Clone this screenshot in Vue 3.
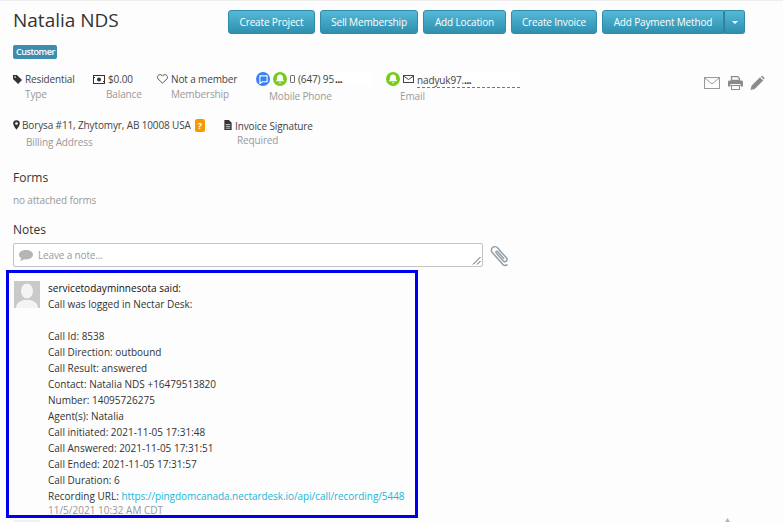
<script setup>
const actions = ['Create Project', 'Sell Membership', 'Add Location', 'Create Invoice']
const lines = [
  'Call Id: 8538',
  'Call Direction: outbound',
  'Call Result: answered',
  'Contact: Natalia NDS +16479513820',
  'Number: 14095726275',
  'Agent(s): Natalia',
  'Call initiated: 2021-11-05 17:31:48',
  'Call Answered: 2021-11-05 17:31:51',
  'Call Ended: 2021-11-05 17:31:57',
  'Call Duration: 6'
]
</script>

<template>
  <div class="page">
    <header class="head">
      <h1>Natalia NDS</h1>
      <div class="actions">
        <button v-for="a in actions" :key="a" class="btn act">{{ a }}</button>
        <div class="split">
          <button class="btn main">Add Payment Method</button>
          <button class="btn caret"><i></i></button>
        </div>
      </div>
    </header>
    <span class="badge">Customer</span>

    <section class="info">
      <div class="cell type">
        <div class="val">
          <svg width="9" height="9" viewBox="0 0 12 12"><path d="M0 0h5.200L12 6.800 6.800 12 0 5.200z" fill="#333"/><circle cx="2.800" cy="2.800" r="1.100" fill="#fdfdfd"/></svg>
          Residential
        </div>
        <div class="lab">Type</div>
      </div>
      <div class="cell bal">
        <div class="val">
          <svg width="12" height="9" viewBox="0 0 12 9"><rect x=".5" y=".5" width="11" height="8" fill="none" stroke="#333"/><circle cx="6" cy="4.500" r="2" fill="#333"/><path d="M1 2.500h1M10 6.500h1" stroke="#333"/></svg>
          $0.00
        </div>
        <div class="lab">Balance</div>
      </div>
      <div class="cell mem">
        <div class="val">
          <svg width="11" height="10" viewBox="0 0 12 11"><path d="M6 10.200 1.200 5.400C-.4 3.600 1 .7 3.300.7 4.500.7 5.400 1.400 6 2.400 6.600 1.400 7.500.7 8.700.7c2.300 0 3.700 2.900 2.100 4.700z" fill="none" stroke="#444"/></svg>
          Not a member
        </div>
        <div class="lab">Membership</div>
      </div>
      <div class="cell phone">
        <div class="val">
          <span class="dot blue"><svg width="9" height="9" viewBox="0 0 10 10"><path d="M1 1h8v6.500H3.500L1 9.500z" fill="none" stroke="#fff" stroke-width="1.200"/></svg></span>
          <span class="dot green"><svg width="10" height="10" viewBox="0 0 10 10"><path d="M5 .5c2 0 3 1.500 3 3.200 0 2 .6 2.800 1.300 3.600H.7C1.400 6.500 2 5.700 2 3.700 2 2 3 .5 5 .5zM3.800 8.200h2.400L5 9.700z" fill="#fff"/></svg></span>
          <svg class="mobile" width="5" height="8" viewBox="0 0 5 8"><rect x=".5" y=".5" width="4" height="7" rx=".7" fill="none" stroke="#666"/></svg>
          <span class="masked">(647) 95<b class="mask wide">...</b></span>
        </div>
        <div class="lab">Mobile Phone</div>
      </div>
      <div class="cell mail">
        <div class="val">
          <span class="dot green"><svg width="10" height="10" viewBox="0 0 10 10"><path d="M5 .5c2 0 3 1.500 3 3.200 0 2 .6 2.800 1.300 3.600H.7C1.400 6.500 2 5.700 2 3.700 2 2 3 .5 5 .5zM3.800 8.200h2.400L5 9.700z" fill="#fff"/></svg></span>
          <svg width="11" height="8" viewBox="0 0 11 8"><rect x=".5" y=".5" width="10" height="7" fill="none" stroke="#444"/><path d="m.5 1 5 3.500 5-3.500" fill="none" stroke="#444"/></svg>
          <span class="addr">nadyuk97.<b class="mask">...</b></span>
        </div>
        <div class="lab">Email</div>
      </div>
      <div class="tools">
        <svg width="16" height="12" viewBox="0 0 16 12"><rect x=".5" y=".5" width="15" height="11" fill="none" stroke="#9a9a9a"/><path d="m.7.900 7.300 6 7.300-6" fill="none" stroke="#9a9a9a"/></svg>
        <svg width="15" height="14" viewBox="0 0 15 14"><path d="M3.500 4.500V.5h6l2 2v2z" fill="none" stroke="#8b8b8b" stroke-width="1.300"/><path d="M0 6c0-1 .6-1.500 1.500-1.500h12c.9 0 1.500.5 1.500 1.500v4.500h-2.500V8h-10v2.500H0z" fill="#8b8b8b"/><rect x="3.500" y="9.500" width="8" height="4" fill="none" stroke="#8b8b8b"/></svg>
        <svg width="15" height="14" viewBox="0 0 14 14"><path d="M0 14l1-4.200L9.500 1.300l3.200 3.200L4.200 13z" fill="#8b8b8b"/><path d="M10.300.5 11 0c.4-.2.800-.2 1.100.1l1.700 1.700c.3.300.3.700.1 1l-.5.800z" fill="#8b8b8b"/></svg>
      </div>
    </section>

    <section class="billing">
      <div class="cell address">
        <div class="val">
          <svg width="7" height="10" viewBox="0 0 8 11"><path d="M4 0a3.800 3.800 0 0 1 3.800 3.800C7.800 6 5 9.500 4 11 3 9.500.2 6 .2 3.800A3.800 3.800 0 0 1 4 0z" fill="#333"/><circle cx="4" cy="3.800" r="1.500" fill="#fdfdfd"/></svg>
          Borysa #11, Zhytomyr, AB 10008 USA
          <span class="q">?</span>
        </div>
        <div class="lab">Billing Address</div>
      </div>
      <div class="cell sign">
        <div class="val">
          <svg width="8" height="10" viewBox="0 0 8 11"><path d="M0 0h5l3 3v8H0z" fill="#333"/><path d="M1.500 5h5M1.500 7h5M1.500 9h5" stroke="#fdfdfd" stroke-width=".8"/></svg>
          <span class="signtext">Invoice Signature</span>
        </div>
        <div class="lab">Required</div>
      </div>
    </section>

    <h2 class="forms">Forms</h2>
    <p class="none">no attached forms</p>

    <h2 class="notes">Notes</h2>
    <div class="composer">
      <div class="note-input">
        <svg width="14" height="11" viewBox="0 0 14 11"><path d="M7 0c3.900 0 7 2.100 7 4.700S10.900 9.400 7 9.400c-.7 0-1.400-.1-2-.2C3.800 10.200 2.200 10.800.8 11c.7-.8 1.300-1.700 1.500-2.700C.9 7.400 0 6.100 0 4.700 0 2.100 3.100 0 7 0z" fill="#b5b5b5"/></svg>
        <span>Leave a note...</span>
        <svg class="grip" width="9" height="9" viewBox="0 0 9 9"><path d="M1 8.500 8.500 1M5 8.500 8.500 5" stroke="#555" fill="none"/></svg>
      </div>
      <svg class="clip" width="20" height="22" viewBox="0 0 20 22"><path d="M17.500 19.500c-1.500 1.500-3.500 1.300-4.800-.2L2.500 7.800C1 6.200 1 4 2.500 2.600 4 1.200 6.200 1.300 7.700 3l8.700 9.800c1 1.100.9 2.500 0 3.300-.9.800-2.300.7-3.300-.4L6.300 8c-.5-.6-.5-1.200-.1-1.600.4-.4 1-.3 1.500.2l6.300 7.100" fill="none" stroke="#8f9aa1" stroke-width="1.400"/></svg>
    </div>

    <article class="note">
      <div class="avatar">
        <svg width="26" height="27" viewBox="0 0 26 27"><rect width="26" height="27" fill="#c9c9c9"/><ellipse cx="13" cy="10" rx="6" ry="7.500" fill="#f4f4f4"/><path d="M2 27c0-5 4-7 8-8h6c4 1 8 3 8 8z" fill="#f4f4f4"/></svg>
      </div>
      <div class="body">
        <div class="who">servicetodayminnesota said:</div>
        <div>Call was logged in Nectar Desk:</div>
        <div class="gap"></div>
        <div v-for="l in lines" :key="l">{{ l }}</div>
        <div>Recording URL: <a>https://pingdomcanada.nectardesk.io/api/call/recording/5448</a></div>
        <div class="time">11/5/2021 10:32 AM CDT</div>
      </div>
    </article>
    <svg class="scroll-mark" width="5" height="4" viewBox="0 0 5 4"><path d="M0 4 2.500 0 5 4z" fill="#b5b5b5"/></svg>
    <span class="stub"></span>
  </div>
</template>

<style>
html, body { margin: 0; background: #fdfdfd; overflow: hidden; }
</style>

<style scoped>
.page {
  position: relative;
  box-sizing: border-box;
  width: 783px;
  height: 522px;
  overflow: hidden;
  padding: 10px 0 0 13px;
  background: #fdfdfd;
  border-top: 1px solid #eee;
  font-family: "Open Sans", sans-serif;
  font-size: 10px;
  color: #333;
}
.head { display: flex; justify-content: space-between; height: 24px; padding-right: 38px; margin-top: -1px; }
h1 { margin: -2px 0 0; font-size: 19px; line-height: 24px; font-weight: 400; color: #333; }
.actions { display: flex; gap: 5px; }
.btn {
  box-sizing: border-box;
  height: 24px;
  padding: 0;
  border: 1px solid #2f8ba8;
  border-radius: 3px;
  background: linear-gradient(#54b9d8, #2f8fae);
  color: #fff;
  font: 10px "Open Sans", sans-serif;
  letter-spacing: -.15px;
  white-space: nowrap;
}
.act:nth-child(1) { width: 87px; }
.act:nth-child(2) { width: 98px; }
.act:nth-child(3) { width: 83px; }
.act:nth-child(4) { width: 86px; }
.split { display: flex; }
.main { width: 122px; border-radius: 3px 0 0 3px; }
.caret { width: 21px; border-left-color: #2b7f9a; border-radius: 0 3px 3px 0; display: flex; align-items: center; justify-content: center; }
.caret i { border: 3px solid transparent; border-top-color: #fff; border-bottom: 0; width: 0; height: 0; }
.badge {
  display: block;
  width: 38px;
  margin-top: 11px;
  padding: 0 3px;
  height: 14px;
  line-height: 14px;
  border-radius: 2px;
  background: #3e8cae;
  color: #fff;
  font-size: 9px;
  font-weight: 600;
  letter-spacing: -.45px;
  white-space: nowrap;
}
.info { display: flex; margin-top: 12px; height: 46px; }
.billing { display: flex; height: 45px; }
.cell { flex: none; }
.val { display: flex; align-items: center; gap: 3px; height: 16px; white-space: nowrap; color: #444; letter-spacing: -.13px; }
.lab { color: #999; margin-top: 0; padding-left: 12px; letter-spacing: -.13px; }
.type { width: 80px; }
.bal { width: 64px; }
.bal .val { gap: 3px; }
.bal .lab { padding-left: 13px; }
.mem { width: 99px; }
.mem .lab { padding-left: 14px; }
.phone { width: 130px; }
.phone .lab { padding-left: 13px; margin-top: 2px; }
.mail { width: 189px; }
.mail .lab { padding-left: 14px; margin-top: 2px; }
.dot { display: inline-flex; align-items: center; justify-content: center; width: 14px; height: 14px; border-radius: 50%; flex: none; }
.blue { background: #3b82f0; }
.green { background: #76cc1c; }
.masked { position: relative; }
.mask { display: inline-block; background: #fff; font-weight: 700; color: #222; line-height: 14px; letter-spacing: -.5px; vertical-align: top; }
.wide { width: 36px; margin-left: 1px; }
.addr { display: inline-block; width: 103px; border-bottom: 1px dashed #777; line-height: 14px; margin-top: 2px; background: linear-gradient(90deg, transparent 46px, #fff 46px); }
.addr .mask { background: none; }
.tools { display: flex; gap: 7px; height: 14px; padding-top: 5px; margin: 0 18px 0 auto; align-items: flex-start; }
.tools svg:first-child { margin: 1px 1px 0 0; }
.address { width: 211px; }
.address .val { gap: 2px; }
.q { display: inline-block; width: 10px; height: 13px; line-height: 13px; margin-left: 2px; text-align: center; border-radius: 2px; background: #f59a00; color: #fff; font-weight: 700; font-size: 9px; }
.address .lab { margin-top: 2px; padding-left: 13px; }
.sign .val { gap: 3px; }
.signtext { margin-top: 2px; }
.sign .lab { margin-top: 0; padding-left: 13px; }
h2 { margin: 0; font-size: 12px; line-height: 16px; font-weight: 400; color: #333; }
.forms { margin-top: 8px; }
.none { margin: 7px 0 0; color: #999; line-height: 14px; letter-spacing: -.15px; }
.notes { margin-top: 15px; }
.composer { display: flex; align-items: center; gap: 7px; margin-top: 5px; height: 24px; }
.note-input {
  position: relative;
  box-sizing: border-box;
  width: 470px;
  height: 24px;
  display: flex;
  align-items: center;
  gap: 5px;
  padding-left: 5px;
  background: #fff;
  border: 1px solid #c4c4c4;
  border-radius: 2px;
  color: #999;
  letter-spacing: -.15px;
}
.grip { position: absolute; right: 1px; bottom: 1px; }
.clip { margin-top: 1px; }
.note {
  box-sizing: border-box;
  display: flex;
  gap: 8px;
  width: 412px;
  height: 248px;
  margin: 3px 0 0 -7px;
  padding: 8px 0 0 5px;
  border: 3px solid #0000ee;
  background: #fdfdfd;
}
.avatar { width: 26px; height: 27px; flex: none; }
.body { line-height: 16px; color: #333; white-space: nowrap; margin-top: -1px; }
.who { color: #111; letter-spacing: .02px; }
.gap { height: 16px; }
.body a { color: #24b5d6; letter-spacing: -.06px; }
.time { color: #999; line-height: 11px; margin-top: 1px; }
.scroll-mark { position: absolute; left: 725px; top: 517px; }
.stub { position: absolute; left: 14px; top: 519px; width: 26px; height: 2px; background: #eef0f5; }
</style>
